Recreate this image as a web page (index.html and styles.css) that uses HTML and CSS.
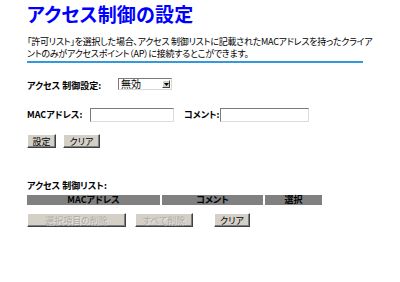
FILE: index.html
```html
<!DOCTYPE html>
<html lang="ja">
<head>
<meta charset="utf-8">
<link rel="stylesheet" href="styles.css">
</head>
<body>
<div class="page">
  <h1 class="title">アクセス制御の設定</h1>
  <p class="desc">「許可リスト」を選択した場合、アクセス 制御リストに記載されたMACアドレスを持ったクライア<br>ントのみがアクセスポイント（AP）に接続するとこができます。</p>
  <div class="rule"></div>

  <div class="row row-mode">
    <span class="label label-mode">アクセス 制御設定:</span>
    <span class="select"><span class="select-value">無効</span><span class="select-arrow"><svg width="5" height="3" viewBox="0 0 5 3"><path d="M0 0h5L2.5 3z" fill="#000"/></svg></span></span>
  </div>

  <div class="row row-mac">
    <span class="label label-mac">MACアドレス:</span>
    <span class="input input-mac"></span>
    <span class="label label-comment">コメント:</span>
    <span class="input input-comment"></span>
  </div>

  <div class="row row-buttons">
    <button class="btn btn-set">設定</button>
    <button class="btn btn-clear">クリア</button>
  </div>

  <div class="list-label">アクセス 制御リスト:</div>
  <div class="list-head">
    <div class="col col-mac">MACアドレス</div>
    <div class="col col-comment">コメント</div>
    <div class="col col-select">選択</div>
  </div>

  <div class="row row-list-buttons">
    <button class="btn btn-disabled btn-delsel">選択項目の削除</button>
    <button class="btn btn-disabled btn-delall">すべて削除</button>
    <button class="btn btn-clear2">クリア</button>
  </div>
</div>
</body>
</html>
```
FILE: styles.css
```css
html, body {
  margin: 0;
  padding: 0;
  background: #ffffff;
}
body {
  font-family: "Noto Sans CJK JP", "DejaVu Sans", sans-serif;
  font-feature-settings: "palt";
  color: #000000;
}
.page {
  padding: 0 0 0 27px;
  width: 340px;
}
.title {
  margin: 0;
  padding-top: 2px;
  font-size: 19px;
  line-height: 24px;
  font-weight: bold;
  color: #0000ff;
  letter-spacing: 0.2px;
}
.desc {
  margin: 10px 0 0 0;
  font-size: 9px;
  line-height: 12px;
  white-space: nowrap;
  letter-spacing: -0.25px;
}
.rule {
  margin-top: 1px;
  width: 336px;
  height: 2px;
  background: #3399dd;
}
.row {
  display: flex;
  align-items: center;
}
.label {
  font-size: 9px;
  font-weight: bold;
  line-height: 12px;
}
.row-mode {
  margin-top: 13px;
}
.label-mode {
  width: 91px;
  padding-top: 4px;
}
.select {
  display: flex;
  width: 54px;
  height: 12px;
  box-sizing: border-box;
  border: 1px solid #7a7a7a;
  border-right-color: #d8d8d8;
  border-bottom-color: #d8d8d8;
  background: #fff;
}
.select-value {
  flex: 1;
  font-size: 10px;
  line-height: 10px;
  padding-left: 2px;
}
.select-arrow {
  width: 8px;
  height: 8px;
  margin: 1px;
  box-sizing: border-box;
  background: #d4d0c8;
  border: 1px solid;
  border-color: #fff #404040 #404040 #fff;
  display: flex;
  align-items: center;
  justify-content: center;
}
.select-arrow svg {
  display: block;
}
.row-mac {
  margin-top: 16px;
}
.label-mac {
  width: 63px;
}
.input {
  display: block;
  height: 14px;
  box-sizing: border-box;
  border: 1px solid #7a7a7a;
  border-right-color: #dcdcdc;
  border-bottom-color: #dcdcdc;
  background: #fff;
}
.input-mac {
  width: 84px;
}
.label-comment {
  margin-left: 10px;
  width: 36px;
}
.input-comment {
  width: 89px;
}
.row-buttons {
  margin-top: 12px;
  gap: 7px;
}
.btn {
  font-family: "Noto Sans CJK JP", sans-serif;
  font-feature-settings: "palt";
  font-size: 9px;
  line-height: 11px;
  height: 14px;
  padding: 0;
  margin: 0;
  background: #d4d0c8;
  color: #000;
  border: 1px solid;
  border-color: #ffffff #404040 #404040 #ffffff;
  box-shadow: inset -1px -1px 0 #808080;
  border-radius: 0;
  white-space: nowrap;
}
.btn-set {
  width: 29px;
}
.btn-clear {
  width: 37px;
}
.list-label {
  margin-top: 32px;
  font-size: 9px;
  font-weight: bold;
  line-height: 12px;
}
.list-head {
  display: flex;
  gap: 2px;
  margin-top: 3px;
  width: 295px;
}
.col {
  background: #808080;
  font-size: 9px;
  font-weight: bold;
  line-height: 10px;
  text-align: center;
  height: 10px;
}
.col-mac {
  width: 133px;
}
.col-comment {
  width: 101px;
}
.col-select {
  width: 57px;
}
.row-list-buttons {
  margin-top: 8px;
  gap: 9px;
}
.btn-disabled {
  color: #b0aca4;
  text-shadow: 1px 1px 0 rgba(255, 255, 255, 0.5);
}
.btn-delsel {
  width: 99px;
}
.btn-delall {
  width: 58px;
}
.btn-clear2 {
  width: 36px;
  margin-left: 12px;
}
```
